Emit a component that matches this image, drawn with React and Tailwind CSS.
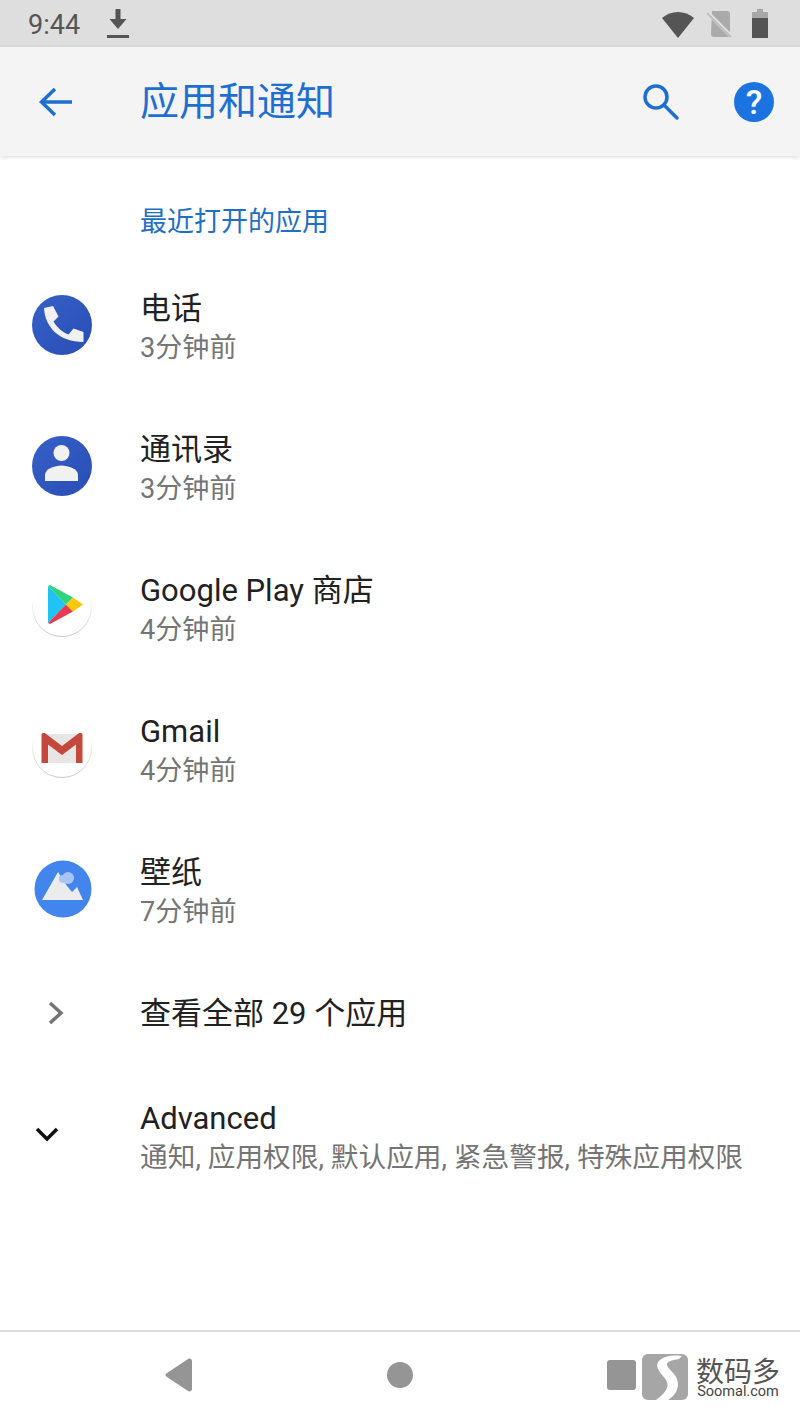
import React from 'react'

const CJK = 'font-["Roboto","Noto_Sans_CJK_SC",sans-serif]'

function PhoneIcon() {
  return (
    <svg width="62" height="62" viewBox="0 0 62 62">
      <defs>
        <linearGradient id="blueFade" x1="0" y1="0" x2="1" y2="1">
          <stop offset="0" stopColor="#3561c9" />
          <stop offset="1" stopColor="#2a4db4" />
        </linearGradient>
      </defs>
      <circle cx="31" cy="31" r="30" fill="url(#blueFade)" />
      <path d="M13 14l9-2 5.500 10.500-5 5c3 5.500 8.500 10.500 15 13l5-6 10 3.500v10C28 48 14 33 13 14z" fill="#f1f1f1" />
    </svg>
  )
}

function ContactIcon() {
  return (
    <svg width="62" height="62" viewBox="0 0 62 62">
      <circle cx="31" cy="31" r="30" fill="url(#blueFade)" />
      <circle cx="30.500" cy="18" r="8" fill="#f1f1f1" />
      <path d="M14 46v-6c0-6 9.500-9.500 16.500-9.500S47 34 47 40v6z" fill="#f1f1f1" />
    </svg>
  )
}

function RingDefs() {
  return (
    <defs>
      <linearGradient id="ringFade" x1="0" y1="0" x2="0" y2="1">
        <stop offset="0.3" stopColor="#ffffff" />
        <stop offset="1" stopColor="#c8c8c8" />
      </linearGradient>
    </defs>
  )
}

function PlayIcon() {
  return (
    <svg width="62" height="62" viewBox="0 0 62 62">
      <RingDefs />
      <circle cx="31" cy="31" r="29.500" fill="#fff" stroke="url(#ringFade)" />
      <path d="M17 10v37l18-18.500z" fill="#1fc4f4" />
      <path d="M17 10l18 18.500 7-7L19 9z" fill="#2fd37c" />
      <path d="M17 47l18-18.500 7 7L19 48z" fill="#ea3a52" />
      <path d="M42 21.500l10 7-10 7-7-7z" fill="#fdc80a" />
    </svg>
  )
}

function GmailIcon() {
  return (
    <svg width="62" height="62" viewBox="0 0 62 62">
      <circle cx="31" cy="31" r="29.500" fill="#fff" stroke="url(#ringFade)" />
      <rect x="12" y="17" width="38" height="29" fill="#e8e6e4" />
      <path d="M10.500 46V18c0-2 2-2.500 4-1.500L31 29l16.500-12.500c2-1 4-.5 4 1.500v28H45V27.500L31 38 17 27.500V46z" fill="#c5483c" />
    </svg>
  )
}

function WallpaperIcon() {
  return (
    <svg className="ml-[3px]" width="58" height="58" viewBox="0 0 58 58">
      <circle cx="29" cy="29" r="28.500" fill="#4285ec" />
      <path d="M8 40L24 12l9 14 5 6 5-5 6 13z" fill="#ececec" />
      <circle cx="34" cy="18" r="6" fill="#a9c5f7" />
      <circle cx="29" cy="19" r="4" fill="#a9c5f7" />
    </svg>
  )
}

const recent = [
  { name: '电话', time: '3分钟前', icon: <PhoneIcon /> },
  { name: '通讯录', time: '3分钟前', icon: <ContactIcon /> },
  { name: 'Google Play 商店', time: '4分钟前', icon: <PlayIcon /> },
  { name: 'Gmail', time: '4分钟前', icon: <GmailIcon /> },
  { name: '壁纸', time: '7分钟前', icon: <WallpaperIcon /> },
]

function StatusBar() {
  return (
    <div className="h-[47px] bg-[#dedede] flex items-center justify-between pl-7 pr-8 shrink-0">
      <div className="flex items-center gap-[27px]">
        <span className="text-[27px] leading-none text-[#555] pt-1 font-['Roboto',sans-serif]">9:44</span>
        <svg width="22" height="29" viewBox="0 0 22 29">
          <path d="M8.500 0h5v10h6L11 20 2.500 10h6z" fill="#555" />
          <rect y="26" width="22" height="3" fill="#555" />
        </svg>
      </div>
      <div className="flex items-center">
        <svg width="34" height="28" viewBox="0 0 34 28">
          <path d="M1 8C10 0 24 0 33 8L17 28z" fill="#555" />
        </svg>
        <svg className="ml-3" width="26" height="28" viewBox="0 0 26 28">
          <path d="M5 1h15a3 3 0 0 1 3 3v23H7a3 3 0 0 1-3-3z" fill="#aaa" />
          <path d="M0 2l25 25" stroke="#dedede" strokeWidth="4" />
          <path d="M0 3l24 24" stroke="#b5b5b5" strokeWidth="1.500" />
        </svg>
        <svg className="ml-[19px]" width="16" height="29" viewBox="0 0 16 29">
          <path d="M5 0h6v3h5v6H0V3h5z" fill="#a8a8a8" />
          <path d="M0 9h16v20H0z" fill="#555" />
        </svg>
      </div>
    </div>
  )
}

function Header() {
  return (
    <div className="relative h-[109px] bg-[#f4f4f4] shadow-[0_1px_4px_rgba(0,0,0,0.16)] flex items-center shrink-0">
      <div className="w-[140px] pl-[38px] shrink-0">
        <svg width="36" height="32" viewBox="0 0 36 32" fill="none" stroke="#1f6fd0" strokeWidth="3.500">
          <path d="M34 16H4" />
          <path d="M17 3L3.500 16 17 29" />
        </svg>
      </div>
      <span className={`text-[39px] leading-none text-[#1f6fd0] pt-[2px] ${CJK}`}>应用和通知</span>
      <div className="ml-auto flex items-center gap-[54px] pr-[26px]">
        <svg width="38" height="38" viewBox="0 0 38 38" fill="none" stroke="#1f6fd0" strokeWidth="3.500">
          <circle cx="14" cy="14" r="11" />
          <path d="M22 22l13 13" strokeLinecap="round" />
        </svg>
        <div className="w-[40px] h-[40px] rounded-full bg-[#1a73e0] flex items-center justify-center text-white text-[34px] font-medium leading-none font-['Roboto',sans-serif]">
          ?
        </div>
      </div>
    </div>
  )
}

function AppRow({ name, time, icon }) {
  return (
    <div className="h-[141px] flex items-center">
      <div className="w-[125px] pl-[31px] pb-[2px] shrink-0 flex items-center">{icon}</div>
      <div className={`pl-[15px] pt-[4px] ${CJK}`}>
        <div className="text-[31px] leading-[38px] text-[#212121]">{name}</div>
        <div className="text-[27.1px] leading-[34px] mt-[3px] text-[#757575]">{time}</div>
      </div>
    </div>
  )
}

function NavBar() {
  return (
    <div className="relative h-[92px] border-t-2 border-[#dcdcdc] flex items-center pb-1 shrink-0">
      <div className="w-[165px] shrink-0" />
      <svg width="28" height="34" viewBox="0 0 28 34">
        <path d="M27 3v28c0 2-2 3-4 2L2 19c-2-1-2-3 0-4L23 1c2-1 4 0 4 2z" fill="#959595" />
      </svg>
      <div className="w-[26px] h-[26px] rounded-full bg-[#959595] ml-[194px]" />
      <div className="w-[29px] h-[30px] rounded-[3px] bg-[#959595] ml-[194px]" />
      <svg className="ml-[6px] mt-1" width="46" height="46" viewBox="0 0 46 46">
        <rect width="46" height="46" rx="6" fill="#a6a6a6" />
        <path d="M40 2C24 0 12 6 16 15c3 7 12 11 9 19-2 5-7 9-11 12h12c8-5 12-13 9-21-3-7-9-10-10-14-1-3 5-5 12-6z" fill="#fff" />
      </svg>
      <div className="ml-[8px] flex flex-col items-center mt-1">
        <span className="text-[28px] leading-[28px] text-[#555] font-['Noto_Sans_CJK_SC',sans-serif]">数码多</span>
        <span className="text-[14.5px] leading-[15px] text-[#444] font-['Roboto',sans-serif]">Soomal.com</span>
      </div>
    </div>
  )
}

export default function App() {
  return (
    <div className="w-[800px] h-[1422px] bg-white flex flex-col overflow-hidden">
      <StatusBar />
      <Header />
      <div className="flex-1">
        <div className={`h-[99px] pl-[140px] pt-[47px] text-[27px] leading-[38px] text-[#1f6fc4] ${CJK}`}>最近打开的应用</div>
        {recent.map((app) => (
          <AppRow key={app.name} {...app} />
        ))}
        <div className="h-[106px] flex items-center">
          <div className="w-[140px] pl-[47px] shrink-0">
            <svg width="18" height="26" viewBox="0 0 18 26" fill="none" stroke="#757575" strokeWidth="3.500">
              <path d="M3 3l11 10L3 23" />
            </svg>
          </div>
          <span className={`text-[31px] leading-none text-[#212121] ${CJK}`}>查看全部 29 个应用</span>
        </div>
        <div className="h-[134px] flex items-center">
          <div className="w-[140px] pl-[35px] pt-[4px] shrink-0">
            <svg width="24" height="16" viewBox="0 0 24 16" fill="none" stroke="#111" strokeWidth="3.500">
              <path d="M2 2l10 10L22 2" />
            </svg>
          </div>
          <div className={`pt-[8px] ${CJK}`}>
            <div className="text-[31px] leading-[38px] text-[#212121]">Advanced</div>
            <div className="text-[27.7px] leading-[34px] mt-[3px] text-[#757575]">通知, 应用权限, 默认应用, 紧急警报, 特殊应用权限</div>
          </div>
        </div>
      </div>
      <NavBar />
    </div>
  )
}
